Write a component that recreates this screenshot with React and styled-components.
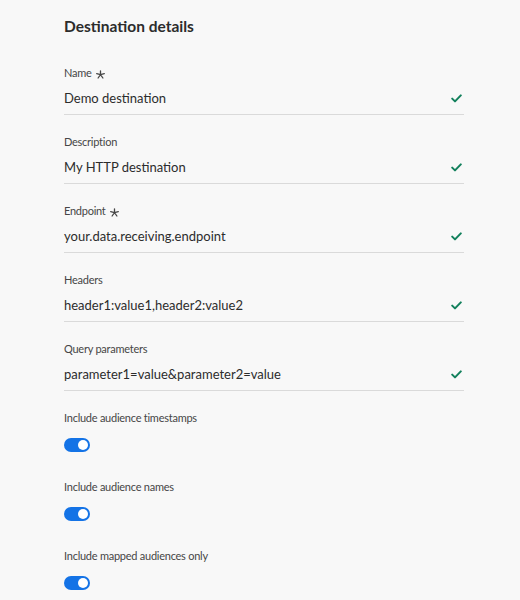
import React, { useState } from 'react'
import styled, { createGlobalStyle } from 'styled-components'

const GlobalStyle = createGlobalStyle`
  html, body {
    margin: 0;
    padding: 0;
    background: #f8f8f8;
  }
  body {
    font-family: Lato, "Liberation Sans", sans-serif;
    color: #2c2c2c;
  }
`

const fields = [
  { label: 'Name', value: 'Demo destination', required: true },
  { label: 'Description', value: 'My HTTP destination' },
  { label: 'Endpoint', value: 'your.data.receiving.endpoint', required: true },
  { label: 'Headers', value: 'header1:value1,header2:value2' },
  { label: 'Query parameters', value: 'parameter1=value&parameter2=value' },
]

const switches = [
  'Include audience timestamps',
  'Include audience names',
  'Include mapped audiences only',
]

function Check() {
  return (
    <svg width="11" height="9" viewBox="0 0 11 9">
      <path d="M1.2 4.6 L4 7.4 L9.8 1.4" fill="none" stroke="#12805c" strokeWidth="2" strokeLinecap="round" strokeLinejoin="round" />
    </svg>
  )
}

// spectrum style five armed asterisk
function Asterisk() {
  return (
    <StarIcon width="9" height="9" viewBox="0 0 9 9">
      <path
        d="M4.5 4.6 L4.5 0.8 M4.5 4.6 L8.3 3.6 M4.5 4.6 L6.9 8 M4.5 4.6 L2.1 8 M4.5 4.6 L0.7 3.6"
        fill="none"
        stroke="#464646"
        strokeWidth="1.3"
        strokeLinecap="round"
      />
    </StarIcon>
  )
}

function Toggle({ on, onChange }) {
  return (
    <Track on={on ? 1 : 0} onClick={onChange}>
      <Knob on={on ? 1 : 0} />
    </Track>
  )
}

export default function App() {
  const [toggles, setToggles] = useState([true, true, true])

  return (
    <>
      <GlobalStyle />
      <Page>
        <Title>Destination details</Title>
        {fields.map((f) => (
          <Field key={f.label}>
            <Label>
              {f.label}
              {f.required && <Asterisk />}
            </Label>
            <InputRow>
              <Value>{f.value}</Value>
              <Check />
            </InputRow>
          </Field>
        ))}
        {switches.map((s, i) => (
          <SwitchField key={s}>
            <Label>{s}</Label>
            <Toggle
              on={toggles[i]}
              onChange={() => setToggles(toggles.map((t, j) => (j === i ? !t : t)))}
            />
          </SwitchField>
        ))}
      </Page>
    </>
  )
}

const Page = styled.div`
  width: 400px;
  padding: 15px 0 0 64px;
  display: flex;
  flex-direction: column;
`

const Title = styled.h2`
  margin: 0;
  height: 22px;
  font-size: 15.5px;
  font-weight: 700;
  line-height: 22px;
  color: #2c2c2c;
  margin-bottom: 28px;
`

const Field = styled.div`
  display: flex;
  flex-direction: column;
  height: 69px;
`

const Label = styled.div`
  font-size: 11px;
  letter-spacing: -0.25px;
  line-height: 16px;
  color: #464646;
  display: flex;
  align-items: center;
`

const StarIcon = styled.svg`
  margin-left: 4px;
  margin-top: 2px;
`

const InputRow = styled.div`
  margin-top: 2px;
  height: 31px;
  display: flex;
  align-items: center;
  justify-content: space-between;
  padding-right: 2px;
  border-bottom: 1px solid #dadada;
`

const Value = styled.span`
  font-size: 13px;
  color: #2c2c2c;
  position: relative;
  top: -1px;
`

const SwitchField = styled.div`
  display: flex;
  flex-direction: column;
  height: 69px;
  gap: 12px;
`

const Track = styled.div`
  width: 26px;
  height: 14px;
  border-radius: 7px;
  background: ${(p) => (p.on ? '#1473e6' : '#b3b3b3')};
  position: relative;
  cursor: pointer;
`

const Knob = styled.div`
  position: absolute;
  top: 2px;
  left: ${(p) => (p.on ? '14px' : '2px')};
  width: 10px;
  height: 10px;
  border-radius: 50%;
  background: #fff;
`
